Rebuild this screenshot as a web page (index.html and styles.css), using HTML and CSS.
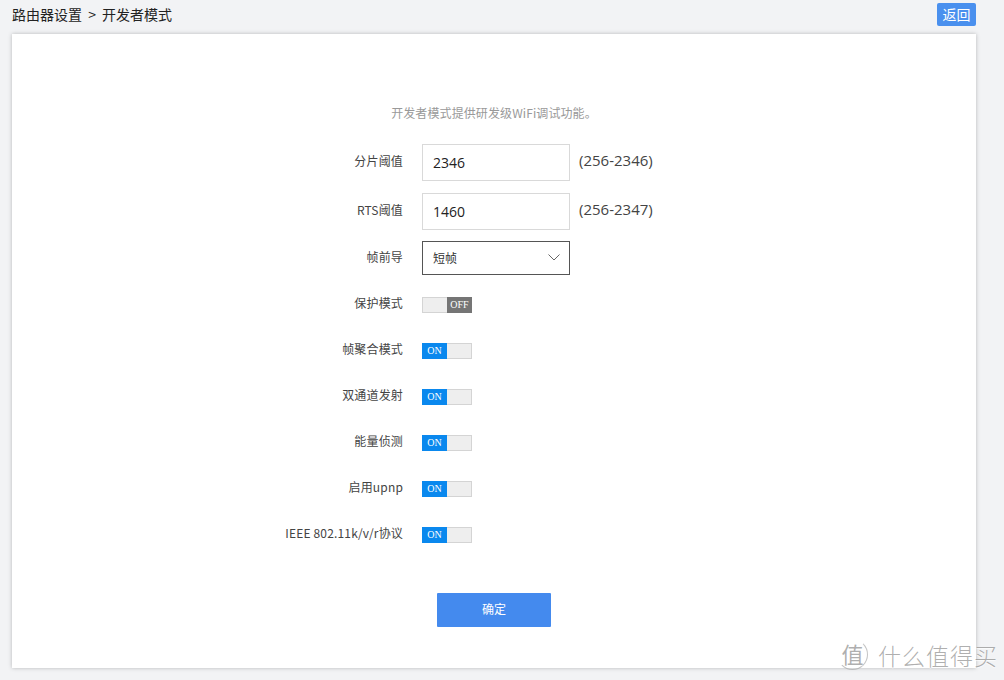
FILE: index.html
```html
<!DOCTYPE html>
<html lang="zh">
<head>
<meta charset="utf-8">
<title>开发者模式</title>
<link rel="stylesheet" href="styles.css">
</head>
<body>
<div class="page">
  <header class="topbar">
    <div class="crumb">路由器设置 &gt; 开发者模式</div>
    <a class="back">返回</a>
  </header>
  <main class="card">
    <p class="hint">开发者模式提供研发级WiFi调试功能。</p>
    <div class="form">
      <div class="row row-input">
        <label class="label">分片阈值</label>
        <div class="text-input">2346</div>
        <span class="range">(256-2346)</span>
      </div>
      <div class="row row-input">
        <label class="label">RTS阈值</label>
        <div class="text-input">1460</div>
        <span class="range">(256-2347)</span>
      </div>
      <div class="row row-select">
        <label class="label">帧前导</label>
        <div class="select">
          <span>短帧</span>
          <svg class="chev" width="12" height="7" viewBox="0 0 12 7"><path d="M0.5 0.5 L6 6 L11.5 0.5" fill="none" stroke="#666" stroke-width="1"/></svg>
        </div>
      </div>
      <div class="row row-toggle first">
        <label class="label">保护模式</label>
        <div class="toggle off"><span class="rest"></span><span class="knob">OFF</span></div>
      </div>
      <div class="row row-toggle">
        <label class="label">帧聚合模式</label>
        <div class="toggle"><span class="knob">ON</span><span class="rest"></span></div>
      </div>
      <div class="row row-toggle">
        <label class="label">双通道发射</label>
        <div class="toggle"><span class="knob">ON</span><span class="rest"></span></div>
      </div>
      <div class="row row-toggle">
        <label class="label">能量侦测</label>
        <div class="toggle"><span class="knob">ON</span><span class="rest"></span></div>
      </div>
      <div class="row row-toggle">
        <label class="label">启用upnp</label>
        <div class="toggle"><span class="knob">ON</span><span class="rest"></span></div>
      </div>
      <div class="row row-toggle">
        <label class="label">IEEE 802.11k/v/r协议</label>
        <div class="toggle"><span class="knob">ON</span><span class="rest"></span></div>
      </div>
    </div>
    <div class="actions"><button class="submit">确定</button></div>
  </main>
</div>
<div class="watermark">
  <span class="wm-logo">值</span>
  <span class="wm-text">什么值得买</span>
</div>
</body>
</html>
```
FILE: styles.css
```css
* { box-sizing: border-box; }
html, body { margin: 0; height: 100%; overflow: hidden; }
body {
  background: #f2f3f5;
  font-family: "Noto Sans CJK SC", "Noto Sans", sans-serif;
  color: #333;
}
.page { padding: 0 28px 0 12px; }
.topbar {
  height: 34px;
  display: flex;
  justify-content: space-between;
  align-items: flex-start;
}
.crumb { font-size: 14px; line-height: 18px; margin-top: 5px; color: #222; word-spacing: 3px; }
.back {
  margin-top: 3px;
  width: 39px;
  height: 23px;
  background: #4a90ee;
  color: #fff;
  font-size: 14px;
  line-height: 23px;
  text-align: center;
  border-radius: 2px;
}
.card {
  width: 964px;
  height: 634px;
  background: #fff;
  box-shadow: 0 0 4px rgba(0,0,0,0.25);
  padding-top: 70px;
}
.hint {
  margin: 0;
  width: 964px;
  text-align: center;
  color: #999;
  font-size: 12px;
  letter-spacing: 0.1px;
  line-height: 18px;
  height: 40px;
}
.form { display: flex; flex-direction: column; }
.row {
  display: grid;
  grid-template-columns: 391px 148px auto;
  column-gap: 19px;
  align-items: center;
}
.label {
  position: relative;
  top: -2px;
  text-align: right;
  font-size: 12px;
  letter-spacing: 0.17px;
  line-height: 18px;
  color: #444;
}
.row-input { height: 37px; margin-bottom: 12px; }
.text-input {
  height: 37px;
  border: 1px solid #d9d9d9;
  padding-left: 10px;
  font-family: "Open Sans", "Noto Sans", sans-serif;
  font-size: 14px;
  line-height: 35px;
  color: #222;
}
.range {
  margin-left: -10px;
  font-family: "Open Sans", "Noto Sans", sans-serif;
  font-size: 15px;
  color: #444;
  position: relative;
  top: -3px;
}
.row-select { height: 34px; margin-top: -1px; }
.row-select .label { top: -1px; }
.select {
  height: 34px;
  border: 1px solid #555;
  display: flex;
  align-items: center;
  justify-content: space-between;
  padding: 0 9px 2px 10px;
  font-size: 12px;
  color: #333;
}
.row-toggle { height: 16px; margin-top: 30px; }
.row-toggle.first { margin-top: 21px; }
.toggle {
  width: 50px;
  height: 16px;
  display: flex;
  background: #eee;
  border: 1px solid #d4d4d4;
}
.knob {
  width: 25px;
  margin: -1px 0 -1px -1px;
  background: #0a88ee;
  color: #fff;
  font-family: "Liberation Serif", "DejaVu Serif", serif;
  font-size: 10px;
  font-weight: 400;
  line-height: 16px;
  text-align: center;
}
.rest { flex: 1; }
.toggle.off .knob {
  background: #757575;
  margin: -1px -1px -1px 0;
}
.actions { width: 964px; padding-left: 425px; margin-top: 51px; }
.submit {
  width: 114px;
  height: 34px;
  border: 0;
  border-radius: 1px;
  background: #448aee;
  color: #fff;
  font-family: inherit;
  font-size: 12px;
  padding: 0 0 3px;
}
.watermark {
  position: absolute;
  left: 837px;
  top: 639px;
  display: flex;
  align-items: center;
  color: rgba(140,140,140,0.7);
  text-shadow: 0 1px 1px rgba(255,255,255,0.8);
  pointer-events: none;
}
.wm-logo {
  width: 31px;
  height: 31px;
  border-radius: 50%;
  border: 1px solid rgba(170,170,170,0.7);
  border-left-color: transparent;
  border-top-color: transparent;
  font-size: 22px;
  line-height: 27px;
  text-align: center;
}
.wm-text { font-size: 23px; line-height: 30px; margin-left: 10px; font-weight: 300; letter-spacing: 1px; }
```
